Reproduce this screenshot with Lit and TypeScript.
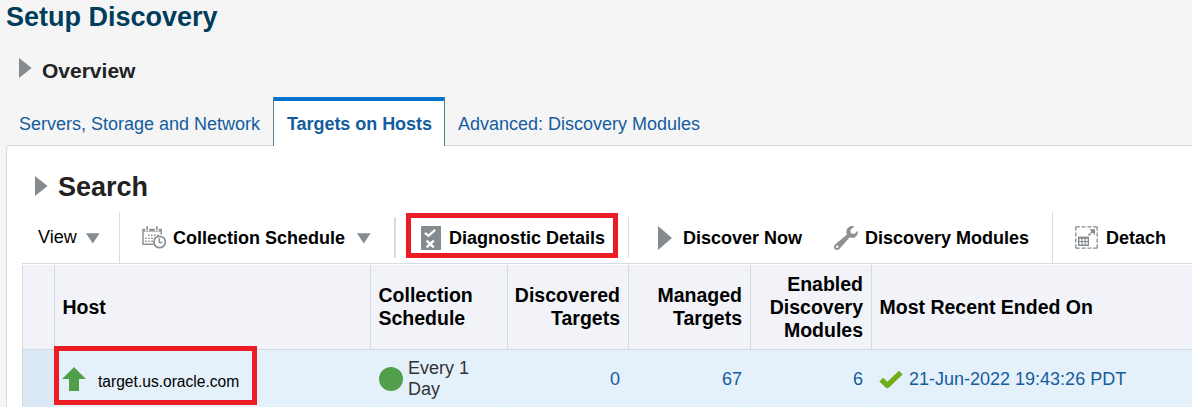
import { LitElement, html, css } from "lit";
import { customElement } from "lit/decorators.js";

const disclosure = html`<svg class="disc" width="13" height="20" viewBox="0 0 13 20"><path d="M0 0 12.6 10 0 20z" fill="#868b8f"/></svg>`;
const caret = html`<svg class="caret" width="14" height="11" viewBox="0 0 14 11"><path d="M0 .3H13.6L6.8 10.6z" fill="#868b8f"/></svg>`;

const calendar = html`<svg width="24" height="23" viewBox="0 0 24 23" fill="none" stroke="#8d9194">
  <path d="M11.5 18.3H1V3.5H19.2V8.5" stroke-width="1.5"/>
  <path d="M1 4.5H19" stroke-width="2.2"/>
  <path d="M5.2 0V5M14.8 0V5" stroke="#fff" stroke-width="4"/>
  <path d="M5.2 .3V4.4M14.8 .3V4.4" stroke-width="1.7"/>
  <path d="M6 9.3H17M3.2 12.3H13M3.2 15.3H11" stroke-width="1.6" stroke-dasharray="1.6 1.4"/>
  <circle cx="17.6" cy="16" r="5.7" fill="#fff" stroke-width="1.7"/>
  <path d="M17.3 12.3V16.5H20.5" stroke-width="1.4"/>
</svg>`;

const checklist = html`<svg width="20" height="24" viewBox="0 0 20 24" fill="none">
  <rect width="20" height="24" rx=".8" fill="#868b8f"/>
  <path d="M4 6.8 7.4 9.8 14.2 3.8" stroke="#fff" stroke-width="2.3"/>
  <path d="M5.6 14.6 12.8 21.4M12.8 14.6 5.6 21.4" stroke="#fff" stroke-width="2.3"/>
</svg>`;

const play = html`<svg width="14" height="24" viewBox="0 0 14 24"><path d="M0 0 14 12 0 24z" fill="#868b8f"/></svg>`;

const wrench = html`<svg width="24" height="24" viewBox="0 0 24 24">
  <path d="M20.2.4C16.5-.8 12.3 1.8 12.4 6.2 12.4 7.1 12.6 7.7 12.9 8.4L1.1 18.5C-.5 20-.3 22.2 1 23.2 2.4 24.4 4.5 24.2 5.6 22.8L15.7 11.2C18.2 12.4 21.3 11.7 23 9.2 23.9 7.8 24 6.2 23.7 4.8L20.3 7.9 16.9 7.2 16.3 4z" fill="#8d9194"/>
  <circle cx="3.2" cy="20.8" r="1.2" fill="#fff"/>
</svg>`;

const detachIcon = html`<svg width="23" height="23" viewBox="0 0 23 23" fill="none" stroke="#868b8f">
  <path d="M.8 .8H22.2M.8 22.2H22.2" stroke-width="1.3" stroke-dasharray="4 1.8"/>
  <path d="M.8 .8V22.2M22.2 .8V22.2" stroke-width="1.3" stroke-dasharray="4 1.8"/>
  <rect x="3.7" y="11.5" width="9.6" height="7.8" stroke-width="1.4"/>
  <path d="M3 11.8H14" stroke-width="2"/>
  <path d="M3.5 15.5H13.5M7 12V19.5M10.2 12V19.5" stroke-width="1.2"/>
  <path d="M13.6 9.4 17.5 5.5" stroke-width="1.7" stroke-dasharray="2.4 .8"/>
  <path d="M14.3 3.2H20V9z" fill="#868b8f" stroke="none"/>
</svg>`;

const upArrow = html`<svg width="24" height="24" viewBox="0 0 24 24"><path d="M12 0 24 12H17V24H7V12H0z" fill="#529f4b"/></svg>`;
const dot = html`<svg width="24" height="24" viewBox="0 0 24 24"><circle cx="12" cy="12" r="12" fill="#529f4b"/></svg>`;
const tick = html`<svg width="24" height="20" viewBox="0 0 24 20"><path d="M2.2 9.6 8.3 15.4 21.8 2.6" fill="none" stroke="#70ad17" stroke-width="5.4" stroke-linejoin="round"/></svg>`;

@customElement("app-root")
export class AppRoot extends LitElement {
  static styles = css`
    :host {
      display: block;
      position: relative;
      box-sizing: border-box;
      height: 407px;
      overflow: hidden;
      font: 18px/21px "Liberation Sans", Arial, sans-serif;
      color: #000;
      background: linear-gradient(45deg, #f8f8f8 25%, #f2f2f2 25% 50%, #f8f8f8 50% 75%, #f2f2f2 75%) 0 0 / 4px 4px;
      white-space: nowrap;
    }
    * { box-sizing: border-box; }
    svg { display: block; flex: none; }
    h1, h2 { margin: 0; }
    h1 { font-size: 27px; line-height: 30px; color: #003d5b; padding: 2px 0 0 6px; height: 58px; }
    .overview { display: flex; height: 39px; padding-left: 19px; gap: 10px; }
    .overview h2 { font-size: 21px; line-height: 24px; color: #222; padding-top: 1px; }
    .tabs { display: flex; height: 49px; padding-left: 19px; color: #145c9e; }
    .tab { padding-top: 17px; }
    .first { width: 254px; }
    .active {
      width: 172px; height: 49px; padding: 13px 0 0 13px;
      background: #fff; border: 1px solid #5f7e92; border-top: 0; box-shadow: inset 0 4px #0572ce;
      border-bottom: 0; padding-top: 17px; letter-spacing: -.05px;
      font-weight: bold; z-index: 1;
    }
    .last { padding-left: 13px; }
    .panel {
      margin: -1px 0 0 6px; height: 262px; background: #fff;
      border: 1px solid #cfdae1; border-right: 0; border-bottom: 0; border-top-left-radius: 5px;
      padding-left: 15px;
    }
    .search { display: flex; align-items: center; gap: 10px; height: 66px; padding: 14px 0 0 13px; }
    .search h2 { font-size: 27px; line-height: 30px; color: #222; padding-top: 1px; }
    .toolbar { display: flex; height: 52px; align-items: center; border-bottom: 1px solid #d3dde5; font-weight: bold; }
    .item { display: flex; align-items: center; }
    .item span { padding-top: 2px; }
    .sep { width: 1px; height: 41px; background: #d3dde5; flex: none; }
    .tall { height: 51px; }
    .wide { width: 2px; }
    .view { width: 97px; padding-left: 16px; gap: 9px; font-weight: normal; }
    .view span { padding-top: 0; }
    .view .caret, .schedule .caret { margin-top: 2px; }
    .schedule { width: 274px; padding-left: 22px; }
    .schedule span { margin: 0 12px 0 7px; }
    .diag { width: 232px; padding-left: 25px; gap: 8px; }
    .now { width: 205px; padding-left: 29px; gap: 11px; }
    .modules { width: 218px; gap: 7px; }
    .detach { padding-left: 22px; gap: 8px; }
    .grid {
      display: grid; grid-template-columns: 32px 316px 137px 121px 122px 121px 321px;
      grid-template-rows: 85px 57px; margin-top: 1px;
    }
    .h {
      display: flex; align-items: center; padding: 0 8px 0 7.5px;
      border-left: 1px solid #d3dbe2; border-bottom: 1px solid #d3dbe2;
      background: #f2f3f8; font: bold 19.5px/23px "Liberation Sans", Arial, sans-serif;
    }
    .c { display: flex; align-items: center; padding: 2px 8px 0 7px; border-left: 1px solid #e9eff6; background: #e4f0fa; }
    .num { justify-content: flex-end; text-align: right; }
    .side { background: #dbe8f5; border-left-color: #d3dbe2; }
    .host { gap: 12px; font-size: 15.6px; border-left-color: #e4f0fa; padding-top: 0; }
    .host span { padding-top: 6px; }
    .every { gap: 5px; color: #333; padding: 0 0 0 8px; }
    .link { color: #145c9e; }
    .date { gap: 6px; }
    .mark { position: absolute; border: 5px solid #ed1c24; }
    .mark-diag { left: 406px; top: 213px; width: 212px; height: 45px; }
    .mark-host { left: 54px; top: 346px; width: 203px; height: 59px; }
  `;

  render() {
    return html`
      <h1>Setup Discovery</h1>
      <div class="overview">${disclosure}<h2>Overview</h2></div>
      <nav class="tabs">
        <div class="tab first">Servers, Storage and Network</div>
        <div class="active">Targets on Hosts</div>
        <div class="tab last">Advanced: Discovery Modules</div>
      </nav>
      <section class="panel">
        <div class="search">${disclosure}<h2>Search</h2></div>
        <div class="toolbar">
          <div class="item view"><span>View</span>${caret}</div>
          <i class="sep tall"></i>
          <div class="item schedule">${calendar}<span>Collection Schedule</span>${caret}</div>
          <i class="sep wide"></i>
          <div class="item diag">${checklist}<span>Diagnostic Details</span></div>
          <i class="sep"></i>
          <div class="item now">${play}<span>Discover Now</span></div>
          <div class="item modules">${wrench}<span>Discovery Modules</span></div>
          <i class="sep tall"></i>
          <div class="item detach">${detachIcon}<span>Detach</span></div>
        </div>
        <div class="grid">
          <div class="h"></div>
          <div class="h">Host</div>
          <div class="h">Collection<br />Schedule</div>
          <div class="h num">Discovered<br />Targets</div>
          <div class="h num">Managed<br />Targets</div>
          <div class="h num">Enabled<br />Discovery<br />Modules</div>
          <div class="h">Most Recent Ended On</div>
          <div class="c side"></div>
          <div class="c host">${upArrow}<span>target.us.oracle.com</span></div>
          <div class="c every">${dot}<span>Every 1<br />Day</span></div>
          <div class="c num link">0</div>
          <div class="c num link">67</div>
          <div class="c num link">6</div>
          <div class="c date link">${tick}<span>21-Jun-2022 19:43:26 PDT</span></div>
        </div>
      </section>
      <div class="mark mark-diag"></div>
      <div class="mark mark-host"></div>
    `;
  }
}
